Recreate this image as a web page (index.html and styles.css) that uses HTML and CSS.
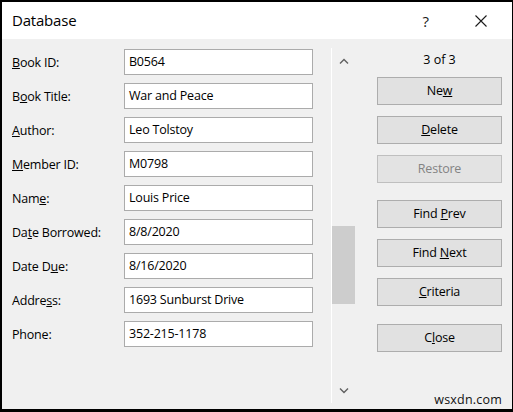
FILE: index.html
```html
<!DOCTYPE html>
<html>
<head>
<meta charset="utf-8">
<link rel="stylesheet" href="styles.css">
</head>
<body>
<div class="window">
  <div class="titlebar">
    <span class="title">Database</span>
    <span class="help">?</span>
    <span class="close-x">
      <svg width="12" height="12" viewBox="0 0 12 12"><path d="M0.5 0.5 L11.5 11.5 M11.5 0.5 L0.5 11.5" stroke="#1a1a1a" stroke-width="1.1" fill="none"/></svg>
    </span>
  </div>
  <div class="content">
    <div class="form">
      <div class="row"><label class="lbl"><u>B</u>ook ID:</label><div class="field">B0564</div></div>
      <div class="row"><label class="lbl">B<u>o</u>ok Title:</label><div class="field">War and Peace</div></div>
      <div class="row"><label class="lbl"><u>A</u>uthor:</label><div class="field">Leo Tolstoy</div></div>
      <div class="row"><label class="lbl"><u>M</u>ember ID:</label><div class="field">M0798</div></div>
      <div class="row"><label class="lbl">Nam<u>e</u>:</label><div class="field">Louis Price</div></div>
      <div class="row"><label class="lbl">Da<u>t</u>e Borrowed:</label><div class="field">8/8/2020</div></div>
      <div class="row"><label class="lbl">Date D<u>u</u>e:</label><div class="field">8/16/2020</div></div>
      <div class="row"><label class="lbl">Addre<u>s</u>s:</label><div class="field">1693 Sunburst Drive</div></div>
      <div class="row"><label class="lbl">Phone:</label><div class="field">352-215-1178</div></div>
    </div>
    <div class="scrollbar">
      <div class="arrow up"><svg width="10" height="6" viewBox="0 0 10 6"><path d="M1 5.5 L5 1.5 L9 5.5" stroke="#606060" stroke-width="1.4" fill="none"/></svg></div>
      <div class="track"><div class="thumb"></div></div>
      <div class="arrow down"><svg width="10" height="6" viewBox="0 0 10 6"><path d="M1 0.5 L5 4.5 L9 0.5" stroke="#606060" stroke-width="1.4" fill="none"/></svg></div>
    </div>
    <div class="side">
      <div class="count">3 of 3</div>
      <div class="btn">Ne<u>w</u></div>
      <div class="btn"><u>D</u>elete</div>
      <div class="btn disabled">Restore</div>
      <div class="btn gap">Find <u>P</u>rev</div>
      <div class="btn">Find <u>N</u>ext</div>
      <div class="btn"><u>C</u>riteria</div>
      <div class="btn gap2">C<u>l</u>ose</div>
      <div class="watermark">wsxdn.com</div>
    </div>
  </div>
</div>
</body>
</html>
```
FILE: styles.css
```css
* { box-sizing: border-box; }
html, body { margin: 0; padding: 0; }
body {
  width: 513px;
  height: 412px;
  background: #000;
  font-family: "Open Sans", "Noto Sans", sans-serif;
  color: #000;
  overflow: hidden;
}
.window {
  margin: 2px 1px 0 2px;
  height: 407px;
  background: #f0f0f0;
  display: flex;
  flex-direction: column;
}
.titlebar {
  height: 37px;
  background: #fff;
  display: flex;
  align-items: center;
  padding-left: 10px;
}
.title {
  font-size: 15px;
  flex: 1;
  color: #000;
  padding-bottom: 1px;
  letter-spacing: -0.2px;
}
.help {
  font-size: 15px;
  margin-right: 46px;
  color: #1a1a1a;
}
.close-x {
  display: flex;
  margin-right: 25px;
}
.content {
  flex: 1;
  display: flex;
}
.form {
  padding: 10px 0 0 10px;
  display: flex;
  flex-direction: column;
  gap: 8px;
  width: 329px;
}
.row {
  display: flex;
  align-items: center;
  height: 26px;
}
.lbl {
  width: 112px;
  font-size: 12.5px;
  letter-spacing: -0.2px;
  color: #000;
}
.field {
  width: 189px;
  height: 26px;
  background: #fff;
  border: 1px solid #ababab;
  font-size: 12.5px;
  letter-spacing: -0.2px;
  padding: 3px 0 0 4px;
  line-height: 18px;
}
.scrollbar {
  width: 24px;
  margin-top: 9px;
  height: 355px;
  border-left: 1px solid #fff;
  display: flex;
  flex-direction: column;
}
.arrow {
  height: 22px;
  display: flex;
  justify-content: center;
  align-items: center;
}
.arrow.up { padding-top: 4px; }
.arrow.down { padding-bottom: 2px; }
.track {
  flex: 1;
  padding-top: 156px;
}
.thumb {
  height: 78px;
  background: #cdcdcd;
}
.side {
  flex: 1;
  padding: 13px 10px 0 22px;
  display: flex;
  flex-direction: column;
  position: relative;
}
.count {
  text-align: center;
  font-size: 12.5px;
  height: 16px;
  line-height: 16px;
  margin-bottom: 9px;
}
.btn {
  height: 28px;
  background: #e1e1e1;
  border: 1px solid #adadad;
  font-size: 12.5px;
  letter-spacing: -0.2px;
  text-align: center;
  line-height: 25px;
  margin-bottom: 11px;
}
.btn.disabled {
  color: #838383;
  border-color: #bfbfbf;
  background: #e3e3e3;
}
.btn.gap { margin-top: 6px; }
.btn.gap2 { margin-top: 7px; }
.watermark {
  position: absolute;
  right: 10px;
  bottom: 1px;
  font-size: 12.5px;
  color: #111;
  letter-spacing: 0.2px;
}
```
